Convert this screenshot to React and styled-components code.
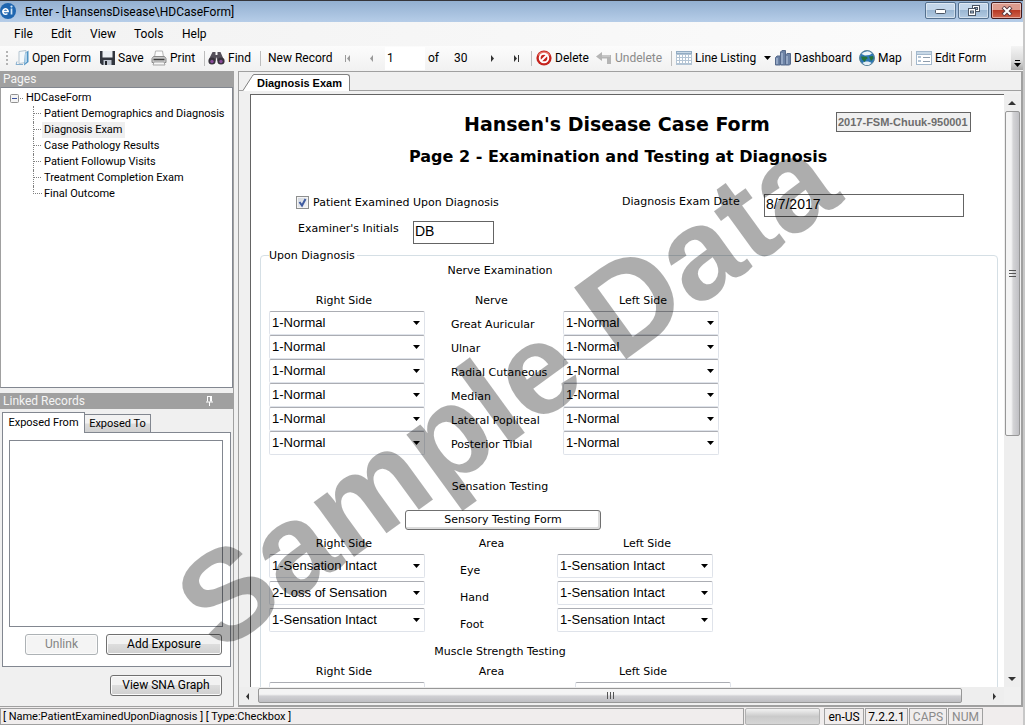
import React from "react";
import styled, { createGlobalStyle, css } from "styled-components";

const ui = `Roboto, "Open Sans", sans-serif`;
const sans = `"Liberation Sans", Arial, sans-serif`;
const wide = `"DejaVu Sans", Verdana, sans-serif`;

const GlobalStyle = createGlobalStyle`
  *, *::before, *::after { box-sizing: border-box; }
  html, body { margin: 0; height: 100%; overflow: hidden; }
  button, input, select { font: inherit; color: inherit; margin: 0; }
`;

/* ---------- window frame ---------- */

const Window = styled.div`
  position: relative;
  height: 100vh;
  display: flex;
  flex-direction: column;
  overflow: hidden;
  background: #f0f0f0;
  color: #000;
  font: 12px/16px ${ui};
  border-right: 2px solid #c8c8c8;
`;

const TitleBar = styled.header`
  flex: none;
  height: 22px;
  display: flex;
  align-items: center;
  border-top: 1px solid #35353a;
  background: linear-gradient(#93b0d1, #b6cde8);
`;

const AppTitle = styled.h1`
  flex: 1;
  margin: 0 0 0 8px;
  font: 12px/16px ${ui};
`;

const CaptionButtons = styled.div`
  display: flex;
  gap: 2px;
  align-self: flex-start;
  padding: 1px 1px 0 0;
`;

const CaptionButton = styled.button`
  width: 31px;
  height: 17px;
  padding: 0;
  display: flex;
  align-items: center;
  justify-content: center;
  border: 1px solid ${(p) => (p.$close ? "#431a1c" : "#55718f")};
  border-radius: 2px;
  background: ${(p) =>
    p.$close
      ? "linear-gradient(#dd9c8e 0 45%, #b83a25 50%, #d0644c)"
      : "linear-gradient(#c3d6ea 0 45%, #9bb7d3 50%, #b3cae2)"};
  box-shadow: inset 0 0 0 1px rgba(255, 255, 255, 0.45);
`;

const MenuBar = styled.nav`
  flex: none;
  height: 24px;
  display: flex;
  align-items: center;
  padding-left: 4px;
  background: linear-gradient(90deg, #f2f2f2, #fcfcfc);
`;

const MenuItem = styled.button`
  width: ${(p) => p.$w}px;
  padding: 0 0 0 10px;
  border: 0;
  background: none;
  text-align: left;
  white-space: nowrap;
`;

const ToolBar = styled.div`
  flex: none;
  height: 25px;
  display: flex;
  align-items: center;
  padding: 0 0 1px 6px;
  background: linear-gradient(#fcfcfc, #f1f1f1);
`;

const Grip = styled.span`
  width: 9px;
  height: 14px;
  background: linear-gradient(#b4b4b4 2px, transparent 2px) 0 0 / 2px 4px repeat-y;
`;

const ToolButton = styled.button`
  flex: none;
  width: ${(p) => p.$w}px;
  height: 22px;
  display: flex;
  align-items: center;
  gap: 3px;
  padding: 0;
  border: 0;
  background: none;
  color: ${(p) => (p.disabled ? "#8a8a8a" : "#000")};
  white-space: nowrap;
`;

const Divider = styled.span`
  flex: none;
  width: 1px;
  height: 15px;
  margin-right: ${(p) => p.$after}px;
  background: #bdbdbd;
`;

const RecordInput = styled.input`
  flex: none;
  width: 40px;
  height: 23px;
  padding: 0 2px;
  border: 0;
  background: #fff;
`;

const RecordCount = styled.span`
  flex: none;
  width: ${(p) => p.$w}px;
  padding-left: 3px;
`;

const Overflow = styled.button`
  width: 12px;
  height: 24px;
  margin-left: auto;
  padding: 0 0 3px;
  border: 0;
  display: flex;
  align-items: flex-end;
  justify-content: center;
  background: linear-gradient(#f4f4f4, #dcdcdc 60%, #a9a9a9);
`;

/* ---------- left side ---------- */

const Body = styled.div`
  flex: 1;
  min-height: 0;
  display: flex;
`;

const Side = styled.aside`
  flex: none;
  width: 234px;
  display: flex;
  flex-direction: column;
  border-right: 1px solid #a0a0a0;
  border-bottom: 1px solid #a0a0a0;
  font: 11px/14px ${ui};
`;

const PaneHeader = styled.h2`
  flex: none;
  height: 16px;
  margin: ${(p) => p.$top}px 0 0;
  padding: 0 19px 0 3px;
  display: flex;
  align-items: center;
  justify-content: space-between;
  background: #a0a0a0;
  color: #f4f4f4;
  font: 12px/16px ${ui};
`;

const Tree = styled.div`
  flex: none;
  height: 301px;
  padding: 2px 0 0 9px;
  border: 1px solid #828790;
  border-left-color: #a0a0a0;
  background: #fff;
`;

const TreeRoot = styled.div`
  height: 16px;
  display: flex;
  align-items: center;
  gap: 3px;
`;

const TreeList = styled.ul`
  margin: 0 0 0 23px;
  padding: 0;
  list-style: none;
`;

const TreeNode = styled.li`
  height: 16px;
  display: flex;
  align-items: center;

  &::before {
    content: "";
    width: 9px;
    height: 8px;
    align-self: flex-start;
    border-left: 1px dotted #808080;
    border-bottom: 1px dotted #808080;
  }

  &:not(:last-child)::before {
    height: 16px;
    border-bottom: 0;
    background: repeating-linear-gradient(90deg, #808080 0 1px, transparent 1px 2px) 0 7px / 100% 1px no-repeat;
  }
`;

const TreeLink = styled.a`
  height: 16px;
  padding: 1px 2px;
  color: #000;
  text-decoration: none;
  background: ${(p) => (p.$current ? "#efefef" : "none")};
  white-space: nowrap;
`;

const Tabs = styled.div`
  flex: none;
  display: flex;
  align-items: flex-end;
  height: 23px;
  padding-left: 2px;
`;

const Tab = styled.button`
  position: relative;
  height: ${(p) => (p.$active ? 21 : 18)}px;
  width: ${(p) => (p.$active ? 83 : 66)}px;
  padding: 0;
  border: 1px solid #828790;
  border-width: ${(p) => (p.$active ? "1px 1px 0" : "1px 1px 0 0")};
  background: ${(p) => (p.$active ? "#fff" : "linear-gradient(#f2f2f2 0 45%, #dcdcdc 55%, #d0d0d0)")};
  margin-bottom: ${(p) => (p.$active ? -1 : 0)}px;
  white-space: nowrap;
`;

const TabPanel = styled.div`
  flex: none;
  margin: 0 2px 0 2px;
  height: 235px;
  padding: 7px 6px 0;
  display: flex;
  flex-direction: column;
  border: 1px solid #828790;
  background: #fff;
`;

const ListBox = styled.div`
  height: 187px;
  border: 1px solid #828790;
  margin-right: 1px;
`;

const ButtonRow = styled.div`
  display: flex;
  justify-content: flex-end;
  gap: 8px;
  padding: ${(p) => p.$pad};
`;

const PushButton = styled.button`
  width: ${(p) => p.$w}px;
  height: 21px;
  padding: 0 0 1px;
  border: 1px solid #707070;
  border-radius: 3px;
  background: linear-gradient(#f2f2f2 0 45%, #dddddd 50%, #cfcfcf);
  box-shadow: inset 0 0 0 1px #fbfbfb;
  font: 12px/16px ${ui};
  &:disabled {
    border-color: #adb2b5;
    background: #f4f4f4;
    color: #838383;
  }
`;

/* ---------- form side ---------- */

const Main = styled.main`
  flex: 1;
  min-width: 0;
  margin-left: 4px;
  display: flex;
  flex-direction: column;
  border: 1px solid #a0a0a0;
  border-width: 1px 2px 2px 1px;
`;

const DocTabs = styled.div`
  flex: none;
  height: 19px;
  display: flex;
  align-items: flex-end;
  border-bottom: 1px solid #a0a0a0;
`;

const DocTab = styled.div`
  height: 17px;
  display: flex;
  margin: 0 0 -1px 4px;
`;

const DocTabLabel = styled.button`
  width: 96px;
  height: 17px;
  padding: 0 4px 0 0;
  border: 1px solid #808080;
  border-width: 1px 1px 0 0;
  border-radius: 0 3px 0 0;
  background: #fff;
  font: bold 11px/14px ${sans};
  white-space: nowrap;
`;

const FormArea = styled.div`
  flex: 1;
  min-height: 0;
  display: grid;
  grid-template-columns: minmax(0, 1fr) 16px;
  grid-template-rows: minmax(0, 1fr) 17px;
  padding: 3px 1px 1px 0;
`;

const Page = styled.form`
  margin-left: 11px;
  overflow: hidden;
  border: 1px solid #646464;
  border-width: 1px 0 0 1px;
  background: #fff;
  font: 11px/14px ${wide};
`;

const FormHeader = styled.div`
  display: flex;
  justify-content: space-between;
  align-items: flex-start;
  padding: 17px 33px 0 213px;
`;

const FormTitle = styled.h2`
  margin: 0;
  font: bold 19px/24px ${wide};
  white-space: nowrap;
`;

const FormSubtitle = styled.h3`
  margin: 11px 0 0 158px;
  font: bold 16px/20px ${wide};
  white-space: nowrap;
`;

const RecordId = styled.input`
  width: 135px;
  height: 20px;
  padding: 0 1px;
  border: 1px solid #646464;
  background: #f0f0f0;
  color: #6d6d6d;
  font: bold 11px/18px ${sans};
`;

const FieldGrid = styled.div`
  display: grid;
  grid-template-columns: 371px minmax(0, 1fr);
  row-gap: 4px;
  padding: 27px 0 0;
`;

const Field = styled.div`
  height: ${(p) => (p.$check ? 16 : 23)}px;
  display: flex;
  align-items: ${(p) => (p.$check ? "center" : "flex-start")};
  padding-left: ${(p) => p.$left || 0}px;
`;

const FieldLabel = styled.label`
  width: ${(p) => (p.$w ? p.$w + "px" : "auto")};
  padding-top: 1px;
  white-space: nowrap;
`;

const TextBox = styled.input`
  width: ${(p) => p.$w}px;
  height: 23px;
  padding: 0 1px 3px;
  border: 1px solid #646464;
  background: #fff;
  font: 14px/18px ${sans};
`;

const CheckWrap = styled.span`
  display: grid;
  margin-right: 4px;
  > * { grid-area: 1 / 1; }
  svg { pointer-events: none; }
`;

const CheckBox = styled.input`
  appearance: none;
  width: 13px;
  height: 13px;
  border: 1px solid #8e8f8f;
  background: linear-gradient(135deg, #cfd5de, #f6f6f6);
  box-shadow: inset 0 0 0 1px #f4f4f4;
`;

const Group = styled.fieldset`
  min-width: 0;
  height: 600px;
  margin: 3px 6px 0 9px;
  padding: 1px 0 0 8px;
  border: 1px solid #d5dfe5;
  border-radius: 4px;
  legend { padding: 2px 2px 0 0; }
`;

const Section = styled.section`
  width: 462px;
`;

const SectionTitle = styled.h4`
  margin: ${(p) => p.$top}px 0 0;
  font: 11px/14px ${wide};
  text-align: center;
`;

const FormButton = styled.button`
  display: block;
  width: 196px;
  height: 20px;
  margin: 16px 0 0 136px;
  padding: 0;
  border: 1px solid #707070;
  border-radius: 3px;
  background: #fff;
  box-shadow: inset -1px -1px 0 1px #dcdcdc;
`;

const Heads = styled.div`
  display: grid;
  grid-template-columns: 150px 145px ${(p) => p.$last}px;
  margin-top: ${(p) => p.$top}px;
  text-align: center;
`;

const Rows = styled.div`
  display: grid;
  grid-template-columns: 156px ${(p) => p.$mid}px 156px;
  row-gap: ${(p) => p.$gap}px;
  margin-top: 3px;
`;

const RowName = styled.span`
  padding: ${(p) => p.$pad};
  white-space: nowrap;
`;

const SelectWrap = styled.span`
  display: grid;
  align-items: center;
  > * { grid-area: 1 / 1; }
  svg {
    justify-self: end;
    margin-right: 5px;
    pointer-events: none;
  }
`;

const SelectBox = styled.select`
  appearance: none;
  width: 100%;
  height: 24px;
  padding: 0 16px 1px 2px;
  border: 1px solid #dfe3ea;
  border-top-color: #abadb3;
  border-radius: 2px;
  background: #fff;
  font: 13px/16px ${sans};
`;

/* ---------- scroll bars ---------- */

const barFace = css`
  border: 1px solid #979797;
  border-radius: 2px;
  display: flex;
  align-items: center;
  justify-content: center;
`;

const VBar = styled.div`
  display: flex;
  flex-direction: column;
  align-items: center;
  background: #eeeeee;
`;

const VThumb = styled.div`
  ${barFace}
  width: 15px;
  height: 325px;
  background: linear-gradient(90deg, #f4f4f4 0 40%, #d4d4d6 55%, #c0c0c4);
`;

const HBar = styled.div`
  display: flex;
  align-items: center;
  background: #eeeeee;
`;

const HThumb = styled.div`
  ${barFace}
  flex: 1;
  height: 15px;
  margin: 0 24px 0 1px;
  background: linear-gradient(#f4f4f4 0 40%, #d0d0d3 55%, #bebec2);
`;

const BarArrow = styled.button`
  flex: none;
  width: 18px;
  height: 17px;
  padding: 0;
  border: 0;
  background: none;
  display: flex;
  align-items: center;
  justify-content: center;
  margin-top: ${(p) => (p.$push ? "auto" : "0")};
`;

/* ---------- status bar ---------- */

const StatusBar = styled.footer`
  flex: none;
  height: 18px;
  display: flex;
  gap: 1px;
  padding: 1px 40px 0 0;
  background: #f0eded;
`;

const StatusCell = styled.span`
  flex: ${(p) => (p.$w ? "none" : "1")};
  width: ${(p) => (p.$w ? p.$w + "px" : "auto")};
  border: 1px solid #a0a0a0;
  padding: 0 2px;
  color: ${(p) => (p.$off ? "#8a8a8a" : "#000")};
  text-align: ${(p) => (p.$w ? "center" : "left")};
  font: ${(p) => (p.$w ? `12px/16px ${ui}` : `11px/16px ${ui}`)};
  white-space: nowrap;
`;

const Progress = styled.span`
  flex: none;
  width: 75px;
  margin-right: 3px;
  border: 1px solid #b2b2b2;
  border-radius: 2px;
  background: linear-gradient(#f2f2f2, #cacaca 50%, #d6d6d6);
`;

/* ---------- watermark ---------- */

const Watermark = styled.div`
  position: absolute;
  left: 219px;
  top: 546px;
  transform-origin: 0 109px;
  transform: rotate(-36deg);
  color: rgba(0, 0, 0, 0.32);
  font: bold 129px/129px ${sans};
  white-space: nowrap;
  pointer-events: none;
`;

/* ---------- drawings ---------- */

const Logo = () => (
  <svg width="17" height="17" viewBox="0 0 17 17">
    <circle cx="8" cy="8" r="8" fill="#1f66b0" />
    <path d="M3 8.500h5.200a2.700 2.700 0 1 0-.8 2" fill="none" stroke="#fff" strokeWidth="1.500" />
    <path d="M11.500 5.500v6" stroke="#cfe4f6" strokeWidth="1.700" />
    <circle cx="11.500" cy="3.600" r="1.100" fill="#cfe4f6" />
  </svg>
);

const OpenIcon = () => (
  <svg width="14" height="16" viewBox="0 0 14 16">
    <path d="M4 1.500 11 .5v12l-7 1z" fill="#f4f8fb" stroke="#b4c4d0" />
    <path d="M10 3 13.500.5V12L9 15.500z" fill="#4f93c4" />
    <path d="M10 3.500 12 2v9.500L9.500 14z" fill="#b5d4ea" />
    <path d="M2 11.500 1 14.500h7" fill="none" stroke="#86afcf" />
  </svg>
);

const SaveIcon = () => (
  <svg width="15" height="15" viewBox="0 0 15 15">
    <path d="M0 0h15v14H2l-2-2z" fill="#33373f" />
    <path d="M2.500 0h10v6.500h-10z" fill="#eceff3" />
    <path d="M3.500 9h8v5h-8z" fill="#c2c8d2" />
    <path d="M5 10h2v4H5z" fill="#22252b" />
  </svg>
);

const PrintIcon = () => (
  <svg width="16" height="16" viewBox="0 0 16 16">
    <path d="M4.500 1h7l1 6h-9z" fill="#fcfcfc" stroke="#b4b4b4" />
    <path d="M1 8.500 2.500 6.500h11l1.500 2v4H1z" fill="#c9c9c9" stroke="#8a8a8a" />
    <path d="M2.500 9.500h11" stroke="#3e3e3e" strokeWidth="1.500" />
    <path d="M3 12h10l1 3H2z" fill="#f6f6f6" stroke="#a5a5a5" />
  </svg>
);

const FindIcon = () => (
  <svg width="17" height="15" viewBox="0 0 17 15">
    <path d="M4.500 1h3v3h2V1h3l3 7v2H9.500L8.500 6l-1 4H1V8z" fill="#55505a" />
    <circle cx="4" cy="10" r="3.600" fill="#37323b" />
    <circle cx="13" cy="10" r="3.600" fill="#37323b" />
    <circle cx="4" cy="10.500" r="1.700" fill="#8a4a9a" />
    <circle cx="13" cy="10.500" r="1.700" fill="#8a4a9a" />
  </svg>
);

const DeleteIcon = () => (
  <svg width="16" height="16" viewBox="0 0 16 16">
    <circle cx="8" cy="8" r="7.600" fill="#c5221c" />
    <path d="M1.500 6a7 7 0 0 1 13 0c-4-2-9-2-13 0z" fill="#e8776c" />
    <circle cx="8" cy="8" r="4.300" fill="none" stroke="#fff" strokeWidth="1.900" />
    <path d="m5 11 6-6" stroke="#fff" strokeWidth="1.900" />
  </svg>
);

const UndoIcon = () => (
  <svg width="16" height="14" viewBox="0 0 16 14">
    <path d="M0 5.500 6 1v3h9v9h-4V7.500H6V10z" fill="#b5b5b5" />
    <path d="M6 5h8" stroke="#d8d8d8" />
  </svg>
);

const GridIcon = () => (
  <svg width="16" height="14" viewBox="0 0 16 14" shapeRendering="crispEdges">
    <path d="M0 0h16v14H0z" fill="#b3c4d4" />
    <path d="M0 0h16v3H0z" fill="#93acc3" />
    <path d="M1 1h14v1H1z" fill="#c8d8e6" />
    {[4, 7, 10].map((y) =>
      [1, 4, 7, 10, 13].map((x) => <path key={`${x}-${y}`} d={`M${x} ${y}h2v2h-2z`} fill="#fff" />)
    )}
  </svg>
);

const BarsIcon = () => (
  <svg width="16" height="16" viewBox="0 0 16 16">
    <path d="M.5 7.500 2 6h3v9H.5zM5.500 2 7 .5h3.500V15h-5zM10.500 5l1.500-1.500h3.500V14l-1 1h-4z" fill="#6d83a6" stroke="#566a8c" />
    <path d="M2 8v6M7 3v11M12 6v8" stroke="#a3b5d0" strokeWidth="1.500" />
  </svg>
);

const GlobeIcon = () => (
  <svg width="16" height="16" viewBox="0 0 16 16">
    <circle cx="8" cy="8" r="7.500" fill="#2d76b5" stroke="#5c8397" />
    <path d="M2.500 4a7 7 0 0 1 10.500-.5L10.500 5 6 5.500z" fill="#eef5f9" />
    <path d="M2 6.500h5L9 8l-2 1.500L6 12 3 9.500zM10 6.500l4-.5.5 2.500L12 11l-1-2z" fill="#26733a" />
    <path d="M3.500 13c2.500-2 6.500-2 9 0L10 15H6z" fill="#e4eff5" />
  </svg>
);

const FormIcon = () => (
  <svg width="16" height="14" viewBox="0 0 16 14" shapeRendering="crispEdges">
    <path d="M0 0h16v14H0z" fill="#a3b8cc" />
    <path d="M1 1h14v2H1z" fill="#c8d8e6" />
    <path d="M1 4h14v9H1z" fill="#fff" />
    <path d="M2 6h3M2 10h3" stroke="#b3c4d4" strokeWidth="2" />
    <path d="M7 6.500h7M7 10.500h7" stroke="#8f9dac" strokeWidth="1" />
  </svg>
);

const Triangle = ({ dir, bar, color = "#333" }) => {
  const shapes = {
    left: "M6 2v7L3 5.500z",
    right: "M3 2v7l3-3.500z",
    up: "M1 7h8L5 3z",
    down: "M1 3h8L5 7z",
  };
  return (
    <svg width="10" height="10" viewBox="0 0 10 10">
      <path d={shapes[dir]} fill={color} />
      {bar && <path d={dir === "left" ? "M1.500 2v7" : "M7.500 2v7"} stroke={color} />}
    </svg>
  );
};

const Caret = () => (
  <svg width="7" height="4" viewBox="0 0 7 4">
    <path d="M0 0h7L3.500 4z" fill="#000" />
  </svg>
);

const GripLines = ({ vertical }) => (
  <svg width="9" height="9" viewBox="0 0 9 9">
    <path d={vertical ? "M1.500 1v7M4.500 1v7M7.500 1v7" : "M1 1.500h7M1 4.500h7M1 7.500h7"} stroke="#555" />
  </svg>
);

const PinIcon = () => (
  <svg width="9" height="10" viewBox="0 0 9 10">
    <path d="M2.500 1v4.500M5.500 1v4.500M6.500 1v4.500M2 .5h5M1 6h7M4.500 6v4" fill="none" stroke="#fff" />
  </svg>
);

const Expander = () => (
  <svg width="13" height="9" viewBox="0 0 13 9">
    <rect x=".5" y=".5" width="8" height="8" rx="1" fill="#f4f4f4" stroke="#919191" />
    <path d="M2 4.500h5" stroke="#3b52a0" />
    <path d="M10 4.500h1M12 4.500h1" stroke="#808080" />
  </svg>
);

const MinIcon = () => (
  <svg width="12" height="6" viewBox="0 0 12 6">
    <rect x=".5" y="1.500" width="10" height="4" rx="1" fill="#fff" stroke="#4a5564" />
  </svg>
);

const RestoreIcon = () => (
  <svg width="12" height="11" viewBox="0 0 12 11">
    <rect x="4.500" y=".5" width="7" height="6" fill="#fff" stroke="#4a5564" />
    <rect x="6.500" y="2.500" width="3" height="2" fill="#9bb7d3" stroke="#4a5564" />
    <rect x=".5" y="3.500" width="7" height="7" fill="#fff" stroke="#4a5564" />
    <rect x="2.500" y="6" width="3" height="2" fill="#9bb7d3" stroke="#4a5564" />
  </svg>
);

const CloseIcon = () => (
  <svg width="12" height="10" viewBox="0 0 12 10">
    <path d="m2 1 8 8m0-8-8 8" stroke="#5a3a40" strokeWidth="4" />
    <path d="m2.500 1.500 7 7m0-7-7 7" stroke="#fff" strokeWidth="2" />
  </svg>
);

const TickMark = () => (
  <svg width="13" height="13" viewBox="0 0 13 13">
    <path d="m3.500 6 2.500 3.500L9.500 3" fill="none" stroke="#3f5ba0" strokeWidth="2" />
  </svg>
);

/* ---------- form parts ---------- */

const Select = ({ label, value }) => (
  <SelectWrap>
    <SelectBox aria-label={label} defaultValue={value}>
      <option>{value}</option>
    </SelectBox>
    <Caret />
  </SelectWrap>
);

const PairRows = ({ rows, mid, gap, pad }) => (
  <Rows $mid={mid} $gap={gap}>
    {rows.map(([name, right, left]) => (
      <React.Fragment key={name}>
        <Select label={`${name} right side`} value={right} />
        <RowName $pad={pad}>{name}</RowName>
        <Select label={`${name} left side`} value={left} />
      </React.Fragment>
    ))}
  </Rows>
);

const ColumnHeads = ({ middle, top, last }) => (
  <Heads $top={top} $last={last}>
    <span>Right Side</span>
    <span>{middle}</span>
    <span>Left Side</span>
  </Heads>
);

const pages = [
  "Patient Demographics and Diagnosis",
  "Diagnosis Exam",
  "Case Pathology Results",
  "Patient Followup Visits",
  "Treatment Completion Exam",
  "Final Outcome",
];

const nerves = ["Great Auricular", "Ulnar", "Radial Cutaneous", "Median", "Lateral Popliteal", "Posterior Tibial"].map(
  (n) => [n, "1-Normal", "1-Normal"]
);

const areas = [
  ["Eye", "1-Sensation Intact", "1-Sensation Intact"],
  ["Hand", "2-Loss of Sensation", "1-Sensation Intact"],
  ["Foot", "1-Sensation Intact", "1-Sensation Intact"],
];

const menus = [["File", 37], ["Edit", 39], ["View", 44], ["Tools", 48], ["Help", 50]];

export default function App() {
  return (
    <Window>
      <GlobalStyle />
      <TitleBar>
        <Logo />
        <AppTitle>Enter - [HansensDisease\HDCaseForm]</AppTitle>
        <CaptionButtons>
          <CaptionButton aria-label="Minimize"><MinIcon /></CaptionButton>
          <CaptionButton aria-label="Restore"><RestoreIcon /></CaptionButton>
          <CaptionButton $close aria-label="Close"><CloseIcon /></CaptionButton>
        </CaptionButtons>
      </TitleBar>

      <MenuBar>
        {menus.map(([name, w]) => (
          <MenuItem key={name} $w={w}>{name}</MenuItem>
        ))}
      </MenuBar>

      <ToolBar>
        <Grip />
        <ToolButton $w={85}><OpenIcon />Open Form</ToolButton>
        <ToolButton $w={51}><SaveIcon />Save</ToolButton>
        <ToolButton $w={53}><PrintIcon />Print</ToolButton>
        <Divider $after={3} />
        <ToolButton $w={52}><FindIcon />Find</ToolButton>
        <Divider $after={7} />
        <ToolButton $w={76}>New Record</ToolButton>
        <ToolButton $w={23} aria-label="First record"><Triangle dir="left" bar color="#9a9a9a" /></ToolButton>
        <ToolButton $w={18} aria-label="Previous record"><Triangle dir="left" color="#9a9a9a" /></ToolButton>
        <RecordInput aria-label="Record number" defaultValue="1" />
        <RecordCount $w={26}>of</RecordCount>
        <RecordCount $w={37}>30</RecordCount>
        <ToolButton $w={23} aria-label="Next record"><Triangle dir="right" /></ToolButton>
        <ToolButton $w={20} aria-label="Last record"><Triangle dir="right" bar /></ToolButton>
        <Divider $after={4} />
        <ToolButton $w={60}><DeleteIcon />Delete</ToolButton>
        <ToolButton $w={75} disabled><UndoIcon />Undelete</ToolButton>
        <Divider $after={4} />
        <ToolButton $w={88}><GridIcon />Line Listing</ToolButton>
        <ToolButton $w={11} aria-label="Line listing options"><Caret /></ToolButton>
        <ToolButton $w={84}><BarsIcon />Dashboard</ToolButton>
        <ToolButton $w={52}><GlobeIcon />Map</ToolButton>
        <Divider $after={4} />
        <ToolButton $w={80}><FormIcon />Edit Form</ToolButton>
        <Overflow aria-label="Toolbar options">
          <svg width="7" height="7" viewBox="0 0 7 7">
            <path d="M1 .5h5" stroke="#000" />
            <path d="M0 3h7L3.500 7z" fill="#000" />
          </svg>
        </Overflow>
      </ToolBar>

      <Body>
        <Side>
          <PaneHeader $top={0}>Pages</PaneHeader>
          <Tree>
            <TreeRoot><Expander />HDCaseForm</TreeRoot>
            <TreeList>
              {pages.map((p) => (
                <TreeNode key={p}>
                  <TreeLink href="#" $current={p === "Diagnosis Exam"}>{p}</TreeLink>
                </TreeNode>
              ))}
            </TreeList>
          </Tree>
          <PaneHeader $top={5}>Linked Records<PinIcon /></PaneHeader>
          <Tabs>
            <Tab $active>Exposed From</Tab>
            <Tab>Exposed To</Tab>
          </Tabs>
          <TabPanel>
            <ListBox />
            <ButtonRow $pad="7px 2px 0 0">
              <PushButton $w={73} disabled>Unlink</PushButton>
              <PushButton $w={116}>Add Exposure</PushButton>
            </ButtonRow>
          </TabPanel>
          <ButtonRow $pad="8px 11px 0 0">
            <PushButton $w={112}>View SNA Graph</PushButton>
          </ButtonRow>
        </Side>

        <Main>
          <DocTabs>
            <DocTab>
              <svg width="11" height="17" viewBox="0 0 11 17">
                <path d="M0 17 9 2.500Q10 .5 11 .5V17z" fill="#fff" />
                <path d="M0 16.500 9 2.500Q10 .5 11 .5" fill="none" stroke="#808080" />
              </svg>
              <DocTabLabel>Diagnosis Exam</DocTabLabel>
            </DocTab>
          </DocTabs>
          <FormArea>
            <Page>
              <FormHeader>
                <FormTitle>Hansen's Disease Case Form</FormTitle>
                <RecordId aria-label="Record ID" defaultValue="2017-FSM-Chuuk-950001" readOnly />
              </FormHeader>
              <FormSubtitle>Page 2 - Examination and Testing at Diagnosis</FormSubtitle>

              <FieldGrid>
                <Field $left={45} $check>
                  <CheckWrap>
                    <CheckBox id="examined" type="checkbox" defaultChecked />
                    <TickMark />
                  </CheckWrap>
                  <FieldLabel htmlFor="examined">Patient Examined Upon Diagnosis</FieldLabel>
                </Field>
                <Field>
                  <FieldLabel htmlFor="examdate" $w={142}>Diagnosis Exam Date</FieldLabel>
                  <TextBox id="examdate" $w={200} defaultValue="8/7/2017" />
                </Field>
                <Field $left={47}>
                  <FieldLabel htmlFor="initials" $w={115}>Examiner's Initials</FieldLabel>
                  <TextBox id="initials" $w={81} defaultValue="DB" />
                </Field>
              </FieldGrid>

              <Group>
                <legend>Upon Diagnosis</legend>
                <Section>
                  <SectionTitle $top={0}>Nerve Examination</SectionTitle>
                  <ColumnHeads middle="Nerve" top={16} last={158} />
                  <PairRows rows={nerves} mid={138} gap={0} pad="7px 0 0 26px" />

                  <SectionTitle $top={25}>Sensation Testing</SectionTitle>
                  <FormButton type="button">Sensory Testing Form</FormButton>
                  <ColumnHeads middle="Area" top={7} last={166} />
                  <PairRows rows={areas} mid={132} gap={3} pad="10px 0 0 35px" />

                  <SectionTitle $top={13}>Muscle Strength Testing</SectionTitle>
                  <ColumnHeads middle="Area" top={6} last={158} />
                  <PairRows rows={[["", "", ""]]} mid={150} gap={3} pad="0" />
                </Section>
              </Group>
            </Page>
            <VBar>
              <BarArrow aria-label="Scroll up"><Triangle dir="up" /></BarArrow>
              <VThumb><GripLines /></VThumb>
              <BarArrow $push aria-label="Scroll down"><Triangle dir="down" /></BarArrow>
            </VBar>
            <HBar>
              <BarArrow aria-label="Scroll left"><Triangle dir="left" /></BarArrow>
              <HThumb><GripLines vertical /></HThumb>
              <BarArrow aria-label="Scroll right"><Triangle dir="right" /></BarArrow>
            </HBar>
          </FormArea>
        </Main>
      </Body>

      <StatusBar>
        <StatusCell>[ Name:PatientExaminedUponDiagnosis ] [ Type:Checkbox ]</StatusCell>
        <Progress />
        <StatusCell $w={40}>en-US</StatusCell>
        <StatusCell $w={43}>7.2.2.1</StatusCell>
        <StatusCell $w={38} $off>CAPS</StatusCell>
        <StatusCell $w={35} $off>NUM</StatusCell>
      </StatusBar>

      <Watermark>Sample Data</Watermark>
    </Window>
  );
}
